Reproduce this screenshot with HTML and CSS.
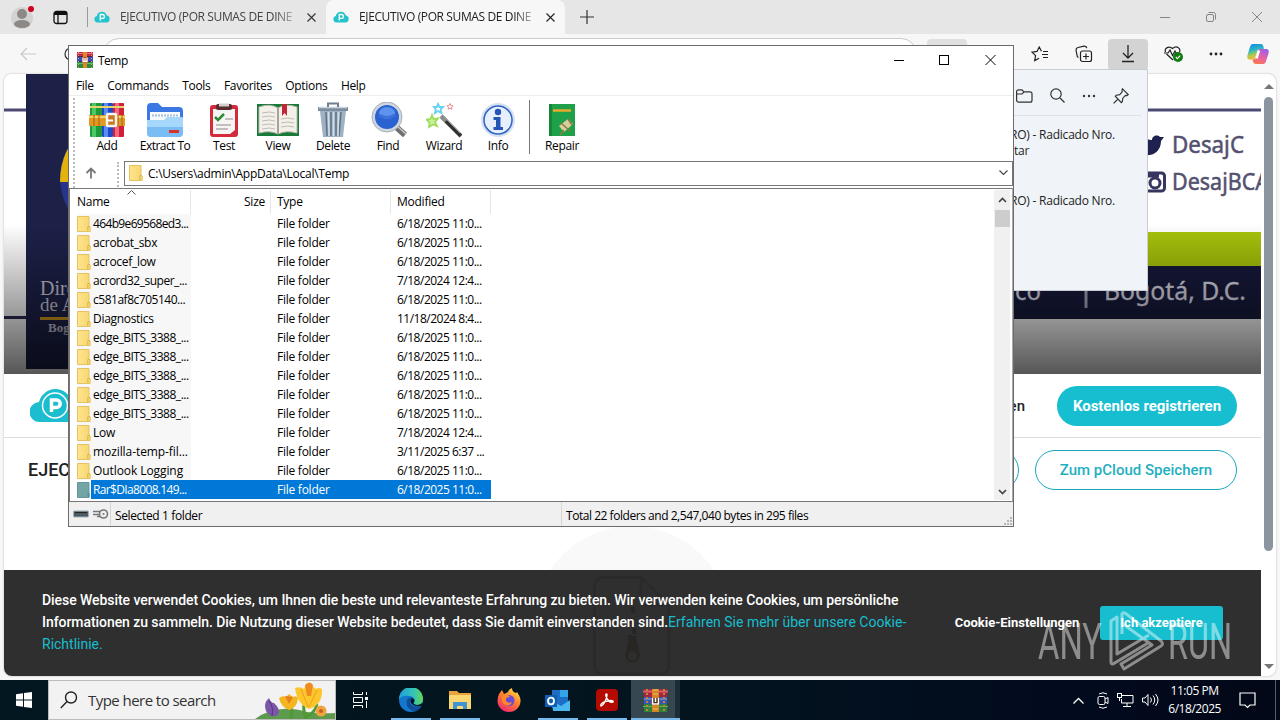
FILE: index.html
```html
<!DOCTYPE html>
<html lang="de">
  <head>
    <meta charset="utf-8">
    <title>Desktop</title>
    <link rel="stylesheet" href="styles.css">
  </head>
  <body>
    <svg width="0" height="0" class="defs">
      <defs>
        <symbol id="cloud" viewBox="0 0 16 12">
          <path d="M3.5 11.5a3.3 3.3 0 0 1-.6-6.5A5 5 0 0 1 12.600 4.200 3.700 3.700 0 0 1 12.500 11.500z" fill="#25c3cb"/>
          <path d="M6.300 9.500v-6h2.200a1.900 1.900 0 0 1 0 3.800H6.300" fill="none" stroke="#fff" stroke-width="1.300"/>
        </symbol>
        <symbol id="books" viewBox="0 0 36 36">
          <rect x="1" y="1" width="12" height="34" rx="1" fill="#1f9a3a"/><rect x="3" y="1" width="4" height="34" fill="#4cc763"/>
          <rect x="13" y="1" width="11" height="34" rx="1" fill="#1f49c8"/><rect x="15" y="1" width="4" height="34" fill="#5b8cf2"/>
          <rect x="24" y="1" width="11" height="34" rx="1" fill="#cf1f3b"/><rect x="26" y="1" width="4" height="34" fill="#f2667a"/>
          <path d="M1 5h12M24 5h11M13 5h11" stroke="#e8d36a" stroke-width="2"/>
          <rect x="0" y="13" width="36" height="11" fill="#e09a22"/><path d="M0 15h36" stroke="#f8d06a" stroke-width="2"/>
          <path d="M5 13v11M10 13v11M29 13v11M33 13v11" stroke="#a65f10"/>
          <rect x="18" y="12" width="9" height="12" rx="1" fill="#c9781b" stroke="#f4f4f4" stroke-width="2.500"/>
          <path d="M18 18.500h6" stroke="#fff" stroke-width="2"/>
        </symbol>
        <symbol id="rar" viewBox="0 0 16 16">
          <path d="M0 0h16v5H0z" fill="#c4264f"/><path d="M0 5h16v5H0z" fill="#3a4ec0"/><path d="M0 10h16v6H0z" fill="#2e8b3c"/>
          <path d="M0 1.500h16" stroke="#e66f7f"/><path d="M0 11.500h16" stroke="#5fbf62"/>
          <path d="M1 4.500h14M1 9.500h14" stroke="#3a2430" stroke-width=".8"/>
          <path d="M1.500 0v16M14.500 0v16" stroke="#d2b04c" stroke-dasharray="1 2"/>
          <path d="M6 0h4v16H6z" fill="#d98a26"/><path d="M5 5h6v6H5z" fill="#a5441e"/>
          <path d="M6 5.500v4h4v-4M8 6v3" stroke="#fff" stroke-width="1.300" fill="none"/>
        </symbol>
        <linearGradient id="fold" x1="0" x2="1"><stop offset="0" stop-color="#ffe48d"/><stop offset="1" stop-color="#f6d66f"/></linearGradient>
        <symbol id="folder" viewBox="0 0 14 16">
          <path d="M.5.500h11.500v10.500h1.200v4.500H.5z" fill="url(#fold)" stroke="#e6c362"/>
          <path d="M10.800 15v-4.500h2" fill="none" stroke="#dcb44a"/>
        </symbol>
      </defs>
    </svg>

    <!-- Edge -->
    <div class="browser">
      <div class="tabs">
        <svg class="avatar" width="26" height="26" viewBox="0 0 26 26"><circle cx="11" cy="14" r="11" fill="#d5d3d2"/><circle cx="11" cy="10" r="5" fill="#8b8886"/><ellipse cx="11" cy="20" rx="8" ry="4" fill="#8b8886"/><circle cx="20" cy="5" r="3" fill="#d0021b"/></svg>
        <svg class="tabact" width="15" height="15" viewBox="0 0 15 15" fill="none" stroke="#111" stroke-width="1.300"><rect x="1" y="1.500" width="13" height="12" rx="2.500"/><path d="M5 5v8.500"/><path d="M1 3.500h13" stroke-width="3"/></svg>
        <div class="tab first">
          <svg width="16" height="12"><use href="#cloud"/></svg>
          <span>EJECUTIVO (POR SUMAS DE DINE</span>
          <svg class="x" width="9" height="9" viewBox="0 0 9 9"><path d="M.5.500l8 8M8.500.500l-8 8" stroke="#333" stroke-width="1.100"/></svg>
        </div>
        <div class="tab active">
          <svg width="16" height="12"><use href="#cloud"/></svg>
          <span>EJECUTIVO (POR SUMAS DE DINE</span>
          <svg class="x" width="9" height="9" viewBox="0 0 9 9"><path d="M.5.500l8 8M8.500.500l-8 8" stroke="#222" stroke-width="1.100"/></svg>
        </div>
        <svg class="plus" width="14" height="14"><path d="M7 0v14M0 7h14" stroke="#333" stroke-width="1.200"/></svg>
        <div class="winbtns">
          <svg width="102" height="12" viewBox="0 0 102 12" fill="none" stroke="#858585"><path d="M0 6.500h10"/><rect x="46.500" y="3.500" width="7" height="7" rx="1.500"/><path d="M48.500 1.500h5a2 2 0 0 1 2 2v5"/><path d="M92 1l10 10M102 1l-10 10"/></svg>
        </div>
      </div>
      <div class="toolbar">
        <svg width="16" height="14" viewBox="0 0 16 14" fill="none" stroke="#c9c9c9" stroke-width="1.200"><path d="M7 1L1 7l6 6M1 7h15"/></svg>
        <svg class="reload" width="14" height="14" viewBox="0 0 14 14" fill="none" stroke="#333" stroke-width="1.200"><circle cx="7" cy="7" r="6"/></svg>
        <div class="urlbar"></div>
        <div class="ext"></div>
        <svg class="star" width="18" height="16" viewBox="0 0 18 16" fill="none" stroke="#222" stroke-width="1.200"><path d="M10.500 5.200L8.200 1 6 5.400l-5 .7 3.600 3.500-.9 5 4.400-2.300M12 5.500h5M11 8.500h6M12 11.500h5"/></svg>
        <svg class="coll" width="18" height="18" viewBox="0 0 18 18" fill="none" stroke="#222" stroke-width="1.200"><rect x="5.500" y="6" width="11" height="10.500" rx="2"/><path d="M11 8.500v6M8 11.500h6M3.500 12.500A2.500 2.500 0 0 1 2 10L1 5a2.500 2.500 0 0 1 2-2.500L9 1.200a2.500 2.500 0 0 1 2.800 2"/></svg>
        <div class="dl"><svg width="14" height="18" viewBox="0 0 14 18" fill="none" stroke="#222" stroke-width="1.300"><path d="M7 0v13M2 8l5 5 5-5M1 16.500h12"/></svg></div>
        <svg class="heart" width="20" height="18" viewBox="0 0 20 18" fill="none" stroke="#222" stroke-width="1.200"><path d="M9 15L2.500 9M1.500 7C0 3 5 .5 8.500 3.500 12.500 0 17 3 15.500 7"/><path d="M0 8h4l2-3 2.500 5.500L11 6l1 2h2"/><circle cx="14" cy="12" r="5" fill="#107c10" stroke="none"/><path d="M11.800 12l1.600 1.600 2.800-3" stroke="#fff"/></svg>
        <svg class="dots" width="14" height="4" fill="#222"><circle cx="2" cy="2" r="1.400"/><circle cx="7" cy="2" r="1.400"/><circle cx="12" cy="2" r="1.400"/></svg>
        <svg width="22" height="20" viewBox="0 0 22 20">
          <defs>
            <linearGradient id="cpa" x1="0" y1="0" x2=".3" y2="1"><stop offset="0" stop-color="#1b7fe0"/><stop offset=".45" stop-color="#27b7c8"/><stop offset=".75" stop-color="#b6cc45"/><stop offset="1" stop-color="#f2b53a"/></linearGradient>
            <linearGradient id="cpb" x1=".7" y1="0" x2=".2" y2="1"><stop offset="0" stop-color="#9b5fe6"/><stop offset=".5" stop-color="#ea5fa5"/><stop offset="1" stop-color="#fb7a42"/></linearGradient>
          </defs>
          <path d="M6 0h8c2 0 2.500 2 3 5h-4c-2 0-2.500 1-3 3l-1.500 5c-.5 2-1.500 2.500-3 2.500H2.500C0 15.500 0 13 .5 11L3 3c.5-2 1.500-3 3-3z" fill="url(#cpa)"/>
          <path d="M13 5h6c3 0 3 2.500 2.500 4.500L19 17c-.5 2-1.500 3-3 3H9c-2 0-3-1.500-3.500-4.500 2 0 3-.5 3.500-2.500l1.500-5.500C11 5.500 12 5 13 5z" fill="url(#cpb)"/>
          <path d="M12 6.500l-2.500 8" stroke="#fff" stroke-width="2.500"/>
        </svg>
      </div>

      <div class="page">
        <div class="site">
          <svg class="hero" width="1257" height="300" viewBox="4 74 1257 300">
            <defs>
              <linearGradient id="shade" x1="0" y1="0" x2="0" y2="1"><stop offset="0" stop-color="#000" stop-opacity="0"/><stop offset="1" stop-color="#000" stop-opacity=".66"/></linearGradient>
            </defs>
            <rect x="4" y="74" width="1257" height="300" fill="#fff"/>
            <path d="M4 110h1257" stroke="#4c4a74" stroke-width="3"/>
            <rect x="1000" y="232" width="261" height="34" fill="#a9c40b"/>
            <path d="M4 317.500h30" stroke="#2b2b55" stroke-width="3"/>
            <rect x="1000" y="266" width="261" height="53" fill="#171a3c"/>
            <rect x="26" y="74" width="60" height="295" fill="#1d2148"/>
            <ellipse cx="122" cy="178" rx="62" ry="62" fill="#26358a"/>
            <path d="M86 128q-26 20-26 54h26z" fill="#e3b309"/>
            <g font-family="Liberation Serif" fill="#c4c4d0"><text x="40" y="295" font-size="20">Direc</text><text x="40" y="311" font-size="19">de A</text><text x="48" y="332" font-size="13" font-weight="bold">Bogo</text></g>
            <path d="M40 318.500h28" stroke="#d09a1a" stroke-width="3"/>
            <g font-family="Noto Sans, sans-serif" fill="#53516f" stroke="#53516f" stroke-width=".5" font-size="23">
              <text x="1172" y="153" textLength="72" lengthAdjust="spacingAndGlyphs">DesajC</text>
              <text x="1172" y="190" textLength="97" lengthAdjust="spacingAndGlyphs">DesajBCA</text>
            </g>
            <path d="M1140 154c10 4 21-1 21-13l3-4h-4c-3-3-8-1-8 3-4 0-7-2-10-4z" fill="#1f2150"/>
            <rect x="1145.500" y="173" width="19" height="18" rx="3" fill="none" stroke="#35355f" stroke-width="3"/><circle cx="1155" cy="183" r="5" fill="none" stroke="#35355f" stroke-width="3"/><path d="M1145 175h14" stroke="#35355f" stroke-width="5"/>
            <g font-family="Noto Sans, sans-serif" fill="#d9d9e2" stroke="#d9d9e2" stroke-width=".3" font-size="25"><text x="1015" y="300" textLength="26" lengthAdjust="spacingAndGlyphs">co</text><text x="1104" y="300" textLength="142" lengthAdjust="spacingAndGlyphs">Bogotá, D.C.</text></g>
            <path d="M1086 286v22" stroke="#a5a5b8" stroke-width="3"/>
            <rect x="4" y="224" width="1257" height="150" fill="url(#shade)"/>
          </svg>
          <div class="nav">
            <svg width="56" height="34" viewBox="0 0 56 34"><path d="M10 33A10 10 0 0 1 9 13 17 17 0 0 1 42 13a10 10 0 0 1 4 20z" fill="#1bbdcf"/><circle cx="25" cy="16.500" r="12.500" fill="none" stroke="#fff" stroke-width="1.500"/><path d="M21.500 23v-12h5a3.700 3.700 0 0 1 0 7.400h-5" fill="none" stroke="#fff" stroke-width="3.500"/></svg>
            <span class="login">Anmelden</span>
            <button class="register">Kostenlos registrieren</button>
          </div>
          <div class="filebar">
            <span class="filename">EJECU</span>
            <button class="outline small"></button>
            <button class="outline">Zum pCloud Speichern</button>
          </div>
          <div class="circle">
            <svg width="78" height="100" viewBox="0 0 78 100" fill="none"><path d="M10 1.500h38l28 27V88q0 10-10 10H11q-9.500 0-9.500-10V11Q1.500 1.500 10 1.500zM48 2v18q0 9 9 9h18" stroke="#9a9a9a" stroke-width="3"/><path d="M40 31v6M38 42v6M41 52v6M37 59v6" stroke="#555" stroke-width="4"/><path d="M36 60h7l4 19a7 7 0 0 1-15 0z" fill="#7a5a00"/><circle cx="39.500" cy="80" r="4.500" fill="#ddd"/></svg>
          </div>
          <div class="cookies">
            <p>Diese Website verwendet Cookies, um Ihnen die beste und relevanteste Erfahrung zu bieten. Wir verwenden keine Cookies, um persönliche<br>Informationen zu sammeln. Die Nutzung dieser Website bedeutet, dass Sie damit einverstanden sind.<a>Erfahren Sie mehr über unsere Cookie-<br>Richtlinie.</a></p>
            <button class="settings">Cookie-Einstellungen</button>
            <button class="accept">Ich akzeptiere</button>
          </div>
        </div>
        <div class="scroll"><i class="up"></i><i class="thumb"></i><i class="down"></i></div>
      </div>
    </div>

    <!-- downloads flyout -->
    <div class="downloads">
      <div class="dlhead">
        <svg width="17" height="14" viewBox="0 0 17 14" fill="none" stroke="#333" stroke-width="1.200"><path d="M.6 3A2 2 0 0 1 2.600.800h3.400l2 2h6a2 2 0 0 1 2 2v6.400a2 2 0 0 1-2 2H2.600a2 2 0 0 1-2-2zM.6 5H6l2-2.200"/></svg>
        <svg width="15" height="15" viewBox="0 0 15 15" fill="none" stroke="#333" stroke-width="1.200"><circle cx="6" cy="6" r="5.200"/><path d="M10 10l4.500 4.500"/></svg>
        <svg width="14" height="4" fill="#333"><circle cx="2" cy="2" r="1.200"/><circle cx="7" cy="2" r="1.200"/><circle cx="12" cy="2" r="1.200"/></svg>
        <svg width="16" height="16" viewBox="0 0 16 16" fill="none" stroke="#333" stroke-width="1.200"><path d="M9.500.800l5.700 5.700-1.300 1-1.400-.2-2.700 2.900-.5 3.500-1 1L2.300 8.200l1-1 3.400-.6 2.500-2.700L9 2zM5 11L.6 15.400"/></svg>
      </div>
      <div class="dlitem">RO) - Radicado Nro.<br><span>tar</span></div>
      <div class="dlitem second">RO) - Radicado Nro.</div>
    </div>

    <!-- WinRAR -->
    <div class="winrar">
      <div class="title">
        <svg width="16" height="16"><use href="#rar"/></svg>
        <span>Temp</span>
        <svg class="ctl" width="102" height="12" viewBox="0 0 102 12" fill="none" stroke="#000"><path d="M0 6.500h10"/><rect x="45.500" y="1.500" width="9" height="9"/><path d="M91.500 1l10 10M101.500 1l-10 10"/></svg>
      </div>
      <div class="menu"><span>File</span><span>Commands</span><span>Tools</span><span>Favorites</span><span>Options</span><span>Help</span></div>
      <div class="bars">
        <div class="buttons">
          <div class="tb add"><svg width="36" height="36"><use href="#books"/></svg>Add</div>
          <div class="tb extract"><svg width="38" height="36" viewBox="0 0 38 36">
            <path d="M1 32V5q0-4 4-4h7l4 4h17q4 0 4 4v20z" fill="#3c78e4"/><path d="M4 10h30v12H4z" fill="#f7fafd"/><path d="M6 13.500h26" stroke="#a9c0d6" stroke-width="2" stroke-dasharray="2 1"/><path d="M1 18h17l3-3h15q1 0 1 2v14q0 4-4 4H5q-4 0-4-4z" fill="#a5d8fb"/><path d="M1 25h36v6q0 4-4 4H5q-4 0-4-4z" fill="#7abdf4"/><rect x="23" y="28" width="10" height="3" fill="#d8342b"/></svg>Extract To</div>
          <div class="tb test"><svg width="30" height="36" viewBox="0 0 30 36">
            <rect x="1" y="3" width="28" height="32" rx="3" fill="#d42b3a"/><path d="M4 7h22v21l-5 4H4z" fill="#f7f5f3"/><rect x="7" y="2" width="16" height="6" rx="2" fill="#5a2b30"/><path d="M10 3h10" stroke="#d8cfcf" stroke-width="3"/><path d="M6 15l3 3 6-6" fill="none" stroke="#2c8a35" stroke-width="2.500"/><path d="M16 17h8M7 23h15M7 27h12" stroke="#b3adb0" stroke-width="1.500"/></svg>Test</div>
          <div class="tb view"><svg width="44" height="36" viewBox="0 0 44 36">
            <path d="M1 2h42v32H1z" fill="#187a38"/><path d="M3 5Q14 1 22 6q8-5 19-1v26q-11-3-19 1-8-4-19-1z" fill="#f3f0ea" stroke="#beb8ad"/><path d="M22 6v26" stroke="#8d8880" stroke-width="1.500"/><path d="M6 11q8-2 13 0M6 15q8-2 13 0M6 19q8-2 13 0M6 23q8-2 13 0M6 27q8-2 13 0M25 17q7-2 13 0M25 21q7-2 13 0M25 25q7-2 13 0" fill="none" stroke="#bfbbb5"/><path d="M26 2h5v12l-2.500-3-2.500 3z" fill="#c42536"/></svg>View</div>
          <div class="tb delete"><svg width="32" height="36" viewBox="0 0 32 36">
            <path d="M3 9h26l-3 26H6z" fill="#9fb2c4"/><path d="M9 10l1 24M14 10v24M19 10v24M24 10l-2 24" stroke="#5f7388" stroke-width="1.500"/><path d="M11.500 10l.5 24M16.500 10v24M21.500 10l-.5 24" stroke="#d4dee6" stroke-width="1.500"/><path d="M1 5h30v4H1z" fill="#7c8d9e"/><path d="M2 5.500h28" stroke="#cad4dc" stroke-width="1.500"/><path d="M11 5V1.500h10V5" fill="none" stroke="#6f7f8f" stroke-width="2"/></svg>Delete</div>
          <div class="tb find"><svg width="37" height="36" viewBox="0 0 37 36">
            <path d="M25 24l10 9" stroke="#707070" stroke-width="6"/><path d="M26 23l10 9" stroke="#c9c9c9" stroke-width="1.500"/><circle cx="17" cy="15" r="15" fill="#cfd6dd" stroke="#a6b1bb"/><circle cx="17" cy="15" r="12" fill="#2b62d2"/><ellipse cx="17" cy="11" rx="8" ry="6" fill="#5d93ee"/><path d="M9 13q8 5 16 0" stroke="#3b70d8" stroke-width="3" fill="none"/></svg>Find</div>
          <div class="tb wizard"><svg width="36" height="36" viewBox="0 0 36 36">
            <path d="M16 15l19 19" stroke="#333" stroke-width="4"/><path d="M15 14l5 5" stroke="#8d8d8d" stroke-width="4"/><path d="M18 15l16 16" stroke="#999"/><g fill="none" stroke-width="1.800"><path d="M6 13l1.500 4 4.500-.5-3 3.500 2 4-4-1.500-4 2.500.5-4.500-3-3 4-.5z" fill="#c9f09a" stroke="#a0dd5d"/><path d="M12 2l1.500 3h3.500l-2.500 2.500 1 3.500-3.500-2-3 2 .8-3.500L8 5h3z" stroke="#66d2ef"/><path d="M24 1.500l1 2 2 .3-1.500 1.400.4 2-1.900-1-1.900 1 .4-2L21 3.800l2-.3z" stroke="#f58b90" stroke-width="1"/></g></svg>Wizard</div>
          <div class="tb info"><svg width="36" height="36" viewBox="0 0 36 36">
            <circle cx="18" cy="18" r="17" fill="#d6e2f2"/><circle cx="18" cy="18" r="14" fill="#e6effb" stroke="#2e62c4" stroke-width="1.500"/><circle cx="18" cy="10" r="3.200" fill="#2455b4"/><path d="M13.500 15h7v10h2.500v3H13.500v-3H16v-7h-2.500z" fill="#2455b4"/></svg>Info</div>
          <div class="tb repair"><svg width="28" height="36" viewBox="0 0 28 36">
            <path d="M1 2h26v32H1z" fill="#1fa14a"/><path d="M1 2h3v32H1z" fill="#15873a"/><path d="M5 8.500h18" stroke="#e9a92f" stroke-width="2.500"/><path d="M11 24l9-7 5 5-9 8z" fill="#d9cf9c"/><path d="M13 21l9 8M20 17l4 6M12 33l4-5" stroke="#8b7a45" stroke-width="1.500"/></svg>Repair</div>
        </div>
        <div class="address">
          <svg width="12" height="12" viewBox="0 0 12 12" fill="none" stroke="#777" stroke-width="1.800"><path d="M6 11.500V1.500M1.500 6L6 1.500 10.500 6"/></svg>
          <div class="path"><svg width="14" height="16"><use href="#folder"/></svg><span>C:\Users\admin\AppData\Local\Temp</span><svg class="caret" width="9" height="6"><path d="M.5.500l4 4 4-4" fill="none" stroke="#444" stroke-width="1.100"/></svg></div>
        </div>
      </div>
      <div class="list">
        <div class="table">
          <div class="row head"><span class="name">Name<svg width="9" height="5"><path d="M.5 4.500l4-4 4 4" fill="none" stroke="#555"/></svg></span><span class="size">Size</span><span>Type</span><span>Modified</span></div>
          <div class="row"><span class="name"><svg width="14" height="16"><use href="#folder"/></svg><b class="tight">464b9e69568ed3...</b></span><span class="size"></span><span>File folder</span><span class="date">6/18/2025 11:0...</span></div>
          <div class="row"><span class="name"><svg width="14" height="16"><use href="#folder"/></svg><b>acrobat_sbx</b></span><span class="size"></span><span>File folder</span><span class="date">6/18/2025 11:0...</span></div>
          <div class="row"><span class="name"><svg width="14" height="16"><use href="#folder"/></svg><b>acrocef_low</b></span><span class="size"></span><span>File folder</span><span class="date">6/18/2025 11:0...</span></div>
          <div class="row"><span class="name"><svg width="14" height="16"><use href="#folder"/></svg><b class="mid">acrord32_super_...</b></span><span class="size"></span><span>File folder</span><span class="date">7/18/2024 12:4...</span></div>
          <div class="row"><span class="name"><svg width="14" height="16"><use href="#folder"/></svg><b class="mid">c581af8c705140...</b></span><span class="size"></span><span>File folder</span><span class="date">6/18/2025 11:0...</span></div>
          <div class="row"><span class="name"><svg width="14" height="16"><use href="#folder"/></svg><b>Diagnostics</b></span><span class="size"></span><span>File folder</span><span class="date">11/18/2024 8:4...</span></div>
          <div class="row"><span class="name"><svg width="14" height="16"><use href="#folder"/></svg><b class="mid">edge_BITS_3388_...</b></span><span class="size"></span><span>File folder</span><span class="date">6/18/2025 11:0...</span></div>
          <div class="row"><span class="name"><svg width="14" height="16"><use href="#folder"/></svg><b class="mid">edge_BITS_3388_...</b></span><span class="size"></span><span>File folder</span><span class="date">6/18/2025 11:0...</span></div>
          <div class="row"><span class="name"><svg width="14" height="16"><use href="#folder"/></svg><b class="mid">edge_BITS_3388_...</b></span><span class="size"></span><span>File folder</span><span class="date">6/18/2025 11:0...</span></div>
          <div class="row"><span class="name"><svg width="14" height="16"><use href="#folder"/></svg><b class="mid">edge_BITS_3388_...</b></span><span class="size"></span><span>File folder</span><span class="date">6/18/2025 11:0...</span></div>
          <div class="row"><span class="name"><svg width="14" height="16"><use href="#folder"/></svg><b class="mid">edge_BITS_3388_...</b></span><span class="size"></span><span>File folder</span><span class="date">6/18/2025 11:0...</span></div>
          <div class="row"><span class="name"><svg width="14" height="16"><use href="#folder"/></svg><b>Low</b></span><span class="size"></span><span>File folder</span><span class="date">7/18/2024 12:4...</span></div>
          <div class="row"><span class="name"><svg width="14" height="16"><use href="#folder"/></svg><b class="wide">mozilla-temp-fil...</b></span><span class="size"></span><span>File folder</span><span class="date">3/11/2025 6:37 ...</span></div>
          <div class="row"><span class="name"><svg width="14" height="16"><use href="#folder"/></svg><b class="wide">Outlook Logging</b></span><span class="size"></span><span>File folder</span><span class="date">6/18/2025 11:0...</span></div>
          <div class="row selected"><span class="name"><svg width="14" height="16" viewBox="0 0 14 16"><path d="M.5.500h11.500v15H.5z" fill="#73a5a6" stroke="#6496a0"/><path d="M10.500 15v-4h2v4z" fill="#5d8f98"/></svg><b class="tight">Rar$DIa8008.149...</b></span><span class="size"></span><span>File folder</span><span class="date">6/18/2025 11:0...</span></div>
        </div>
        <div class="vscroll">
          <svg width="9" height="6"><path d="M1 5l3.500-3.500L8 5" fill="none" stroke="#444" stroke-width="1.700"/></svg>
          <i></i>
          <svg class="bottom" width="9" height="6"><path d="M1 1l3.500 3.500L8 1" fill="none" stroke="#444" stroke-width="1.700"/></svg>
        </div>
      </div>
      <div class="status">
        <svg width="36" height="12" viewBox="0 0 36 12"><rect x=".5" y="3" width="15" height="6" rx="1" fill="#4d5a63" stroke="#a4afb6"/><path d="M2 4.500h12" stroke="#222"/><path d="M20 3.500h9M20 6.500h7M24 8.500h4" stroke="#777" stroke-width="1.500"/><circle cx="30.500" cy="6" r="4" fill="#eee" stroke="#777" stroke-width="1.600"/><circle cx="30.500" cy="6" r="1" fill="#777"/></svg>
        <span class="sel">Selected 1 folder</span>
        <span class="total">Total 22 folders and 2,547,040 bytes in 295 files</span>
        <svg class="grip" width="9" height="9" fill="#b5b5b5"><path d="M6 0h2v2H6zM3 3h2v2H3zM6 3h2v2H6zM0 6h2v2H0zM3 6h2v2H3zM6 6h2v2H6z"/></svg>
      </div>
    </div>

    <svg class="watermark" width="200" height="64" viewBox="1036 608 200 64">
      <g font-family="Roboto, sans-serif" font-weight="400" font-size="50" fill="#fff">
        <text x="1038" y="659" textLength="64" lengthAdjust="spacingAndGlyphs">ANY</text>
        <text x="1168" y="659" textLength="64" lengthAdjust="spacingAndGlyphs">RUN</text>
      </g>
      <path d="M1148 643l-35 21q-2 0-2-2v-41l6-4v37l32-19M1122 634v-20q1-2 3-1l36 28q3 3 0 5l-37 23-3-5 31-19-29-21" fill="none" stroke="#fff" stroke-width="3" stroke-linejoin="round"/>
    </svg>

    <div class="taskbar">
      <div class="start"><svg width="16" height="16" fill="#fff"><path d="M0 2.300L7 1.300V7.600H0zM8 1.100L16 0V7.600H8zM0 8.500H7V14.800L0 13.800zM8 8.500H16V16L8 14.900z"/></svg></div>
      <div class="search">
        <svg class="lens" width="18" height="18" viewBox="0 0 18 18" fill="none" stroke="#222" stroke-width="1.400"><circle cx="11" cy="6.500" r="5.500"/><path d="M7 10.500L.8 17"/></svg>
        <span>Type here to search</span>
        <svg class="flowers" width="80" height="38" viewBox="0 0 80 38">
          <path d="M0 38Q22 22 52 31 66 33 80 32v6z" fill="#5e9a4d"/>
          <path d="M11 30Q8 22 14 17q2 5 5 5 7 6 4 12-7 4-12-4z" fill="#7b55a8"/><path d="M14 20q5 6 3 15" stroke="#553381" fill="none"/>
          <path d="M36 38Q38 26 34 22M51 38Q46 24 52 20M51 36q9-4 11-13" stroke="#4d9a35" stroke-width="3" fill="none"/>
          <path d="M24 17q4-3 7-1l3-3 4 3q3-2 5 1-1 10-9 12-8-3-10-12z" fill="#f5b51f"/><path d="M30 15l4 8 4-7z" fill="#e68120"/>
          <path d="M40 7q5-2 9 1l3-6 5 3 4 3q3-2 6 0 1 16-13 20-12-5-14-21z" fill="#fdc62c"/><path d="M50 4q5-5 8 0l-2 11h-4z" fill="#ef8c21"/><path d="M46 8l7 18M62 9l-8 17" stroke="#e9a31b"/>
          <circle cx="66" cy="30" r="5.500" fill="#f0a33e"/><circle cx="66" cy="30" r="2" fill="#c45f26"/>
        </svg>
      </div>
      <div class="app"><svg width="17" height="16" viewBox="0 0 17 16" fill="none" stroke="#fff"><path d="M1.500 0v2.500h9V0M1.500 16v-2.500h9V16M1.500 5.500h9v5h-9zM14.500 0v3M14.500 9v7"/><path d="M13 5h3v3h-3z" fill="#fff" stroke="none"/></svg></div>
      <div class="app open edge"><svg width="24" height="24" viewBox="0 0 24 24">
        <defs><linearGradient id="eg" x1="0" x2="1"><stop offset="0" stop-color="#1f9fdc"/><stop offset=".6" stop-color="#35c3b5"/><stop offset="1" stop-color="#62d65a"/></linearGradient></defs>
        <circle cx="12" cy="12" r="12" fill="#1378cc"/><path d="M0 11A12 12 0 0 1 24 11c0 4-3 6-6 6-2 0-4-1-3.500-2 3-4-1-7-4-7C5 7 2 9 0 11z" fill="url(#eg)"/><path d="M8 12c-2 6 3 11 8 11 4-1 6-4 7-6-4 3-11 2-12-3 0-3 2-4 2-4-2-1-4 0-5 2z" fill="#0f4e98"/><path d="M13 10c3 1 3 3 1.500 5 0 2 5 3 9 0L24 17q-6 3-11-1-3-3 0-6z" fill="#031520"/></svg></div>
      <div class="app open"><svg width="22" height="20" viewBox="0 0 22 20"><path d="M0 1h8l2 2h12v16H0z" fill="#e8a33b"/><path d="M1 5h21v14H0V6z" fill="#fbd772"/><path d="M4 19v-7h14v7h-4v-3H8v3z" fill="#3f93d2"/></svg></div>
      <div class="app"><svg width="24" height="24" viewBox="0 0 24 24">
        <defs><linearGradient id="ff" x1=".8" y1="0" x2=".2" y2="1"><stop offset="0" stop-color="#ffe14b"/><stop offset=".45" stop-color="#ff7f2b"/><stop offset="1" stop-color="#f0227a"/></linearGradient></defs>
        <path d="M2 6l3-4 2 4 4-2q1-3 4-4 0 4 4 5l1-1q4 6 3.500 9a11.500 11 0 0 1-23 0Q.5 9 2 6z" fill="url(#ff)"/><circle cx="12" cy="12.500" r="5.500" fill="#6b4ad8"/><path d="M5 8q5-3 8 1-5 0-4 4 2 3 6 1-2 5-7 3-4-3-3-9z" fill="#ff8a2a"/></svg></div>
      <div class="app open"><svg width="25" height="22" viewBox="0 0 25 22"><path d="M7 1h16v18H7z" fill="#1c6fc4"/><path d="M15 1h8v7h-8z" fill="#32a6e6"/><path d="M7 12l9 5 9-6v11H8z" fill="#4bb7f1"/><path d="M0 6h12v12H0z" fill="#0f5eb5"/><ellipse cx="6" cy="12" rx="3" ry="3.300" fill="none" stroke="#fff" stroke-width="1.800"/></svg></div>
      <div class="app open"><svg width="22" height="22" viewBox="0 0 22 22"><rect width="22" height="22" rx="4" fill="#b30b00"/><path d="M5 17c2 0 6-7 6-11 0-2-2-1-1 1 1 4 4 7 7 6 1-1-2-2-5-1-4 0-8 3-7 5z" fill="none" stroke="#fff" stroke-width="1.400"/></svg></div>
      <div class="app open current"><svg width="25" height="23" preserveAspectRatio="none" viewBox="0 0 25 23">
        <path d="M1 0h23v8H1z" fill="#a72340"/><path d="M1 8h23v7H1z" fill="#3855b8"/><path d="M1 15h23v8H1z" fill="#2d8138"/><path d="M0 2.500h25" stroke="#da5f69" stroke-width="2"/><path d="M1 10h23" stroke="#8eacf0"/><path d="M0 17.500h25" stroke="#5db061"/><path d="M4 0v23M21 0v23" stroke="#b58a32" stroke-width="2" stroke-dasharray="2 2"/><path d="M9 0h7v23H9z" fill="#d58425"/><path d="M10 1h5M10 5h5M10 20h5" stroke="#f1c162"/><path d="M8 9h9v7H8z" fill="#4b3122"/><path d="M9.500 9v6h6V9M12.500 9v4" fill="none" stroke="#fff" stroke-width="1.500"/></svg></div>
      <div class="tray">
        <svg width="11" height="7"><path d="M.5 6.500l5-5 5 5" fill="none" stroke="#fff" stroke-width="1.300"/></svg>
        <svg class="cam" width="12" height="17" viewBox="0 0 12 17" fill="none" stroke="#fff"><rect x="1" y="4.500" width="7" height="8" rx="1.500"/><path d="M8 7l3-1.500v6L8 10M2 2q4-2.500 8 0M2 15q4 2.500 8 0"/></svg>
        <svg width="17" height="14" viewBox="0 0 17 14" fill="none" stroke="#fff"><path d="M5 2.500h11v7.500H4.500V6M10 10v3M6 13.500h8"/><rect x=".5" y=".5" width="4" height="4"/><path d="M2.500 5v3"/></svg>
        <svg width="17" height="14" viewBox="0 0 17 14" fill="none" stroke="#fff"><path d="M.5 5h2.500l3-3.500v11L3 9H.5zM8.500 4.500q2 2.500 0 5M11 2.500q3.500 4.500 0 9M13.500 1q5 6 0 12"/></svg>
        <div class="clock">11:05 PM<br>6/18/2025</div>
        <svg width="17" height="17" viewBox="0 0 17 17" fill="none" stroke="#fff" stroke-width="1.200"><path d="M1 1h15v12h-5l-2.500 2.500L6 13H1z"/></svg>
      </div>
    </div>
  </body>
</html>
```
FILE: styles.css
```css
* { box-sizing: border-box; }
body {
  margin: 0;
  width: 1280px;
  height: 720px;
  overflow: hidden;
  position: relative;
  font-family: "Open Sans", "Noto Sans", sans-serif;
  font-size: 12px;
  color: #000;
  display: flex;
  flex-direction: column;
}
svg { display: block; flex: none; }
.defs { position: absolute; }
button { border: 0; margin: 0; padding: 0; background: none; font-family: Roboto, sans-serif; }

/* browser */
.browser { height: 680px; background: #f7f7f7; padding-bottom: 4px; display: flex; flex-direction: column; }
.tabs { height: 34px; background: #e6e6e6; display: flex; align-items: center; }
.avatar { margin-left: 11px; }
.tabact { margin-left: 16px; }
.tab { display: flex; align-items: center; height: 34px; width: 239px; padding-left: 7px; color: #444; }
.tab.first { margin-left: 19px; position: relative; }
.tab.first::before { content: ""; width: 1px; height: 20px; background: #999; margin: 0 6px 0 -7px; }
.tab.active { background: #f7f7f7; border-radius: 8px 8px 0 0; height: 34px; color: #222; }
.tab span {
  width: 178px;
  margin-left: 10px;
  padding-bottom: 1px;
  white-space: nowrap;
  font-size: 12px;
  letter-spacing: -.38px;
  -webkit-mask-image: linear-gradient(90deg, #000 155px, transparent 182px);
}
.tab .x { margin-left: 9px; }
.plus { margin-left: 15px; }
.winbtns { margin-left: auto; margin-right: 18px; }

.toolbar { height: 40px; display: flex; align-items: center; padding-left: 20px; flex: none; }
.reload { margin-left: 28px; }
.urlbar { margin-left: 25px; width: 814px; height: 32px; background: #fff; border: 1px solid #ccc; border-radius: 16px; }
.ext { margin-left: 10px; width: 40px; height: 30px; border-radius: 4px; background: #e0e0e0; }
.star { margin-left: 64px; }
.coll { margin-left: 26px; }
.dl { margin-left: 15px; width: 40px; height: 31px; background: #d3d3d3; border-radius: 4px; display: flex; align-items: center; justify-content: center; }
.heart { margin-left: 16px; }
.dots { margin-left: 25px; margin-right: 24px; }

.page { margin: 0 4px; height: 602px; background: #fff; border-radius: 8px; overflow: hidden; display: flex; box-shadow: 0 0 2px #aaa; }
.site { width: 1257px; display: flex; flex-direction: column; position: relative; }
.nav { height: 64px; display: flex; align-items: center; border-bottom: 1px solid #ddd; padding: 0 24px 0 26px; }
.login { margin-left: auto; font: 500 15px Roboto, sans-serif; color: #222; }
.register { margin-left: 32px; width: 180px; height: 40px; border-radius: 20px; background: #17bed0; color: #fff; font-size: 15px; font-weight: 700; letter-spacing: -.05px; }
.filebar { height: 64px; display: flex; align-items: center; padding: 0 24px; }
.filename { font: 500 18px Roboto, sans-serif; color: #222; margin-right: auto; padding-bottom: 2px; }
.outline { width: 202px; height: 40px; border-radius: 20px; border: 1px solid #17a8b8; color: #1fb0c0; font-size: 15px; font-weight: 500; }
.outline.small { margin-right: 16px; }
.circle { position: absolute; left: 530px; top: 452px; width: 196px; height: 196px; border-radius: 50%; background: #f9f9f9; display: flex; justify-content: center; padding-top: 50px; }
.cookies {
  position: relative;
  margin-top: auto;
  height: 106px;
  background: rgba(36, 36, 36, .95);
  display: flex;
  align-items: center;
  font-family: Roboto, sans-serif;
  color: #fff;
}
.cookies p { margin: 0 0 2px 38px; width: 912px; font-size: 14px; line-height: 22px; font-weight: 500; white-space: nowrap; letter-spacing: -.06px; }
.cookies a { color: #17bed0; font-weight: 400; letter-spacing: 0; }
.settings { color: #fff; font-weight: 700; font-size: 13px; letter-spacing: -.03px; width: 126px; padding-bottom: 2px; white-space: nowrap; }
.accept { margin-left: 20px; width: 123px; height: 34px; padding-bottom: 2px; background: #17bed0; color: #fff; border-radius: 3px; font-size: 13px; font-weight: 700; }
.scroll { width: 15px; display: flex; flex-direction: column; align-items: center; padding: 10px 0 7px; }
.scroll .up { border: 5px solid transparent; border-top: 0; border-bottom-color: #777; height: 5px; }
.scroll .thumb { width: 9px; height: 454px; border-radius: 5px; background: #8c959f; margin-top: 8px; }
.scroll .down { border: 5px solid transparent; border-bottom: 0; border-top-color: #777; margin-top: auto; }

.downloads { position: absolute; left: 788px; top: 69px; width: 360px; height: 222px; background: #f0f3f8; border: 1px solid #c9ccd2; color: #222; font-size: 12px; }
.dlhead { height: 46px; margin: 0 6px; border-bottom: 1px solid #dde0e5; display: flex; align-items: center; justify-content: flex-end; gap: 17px; padding: 6px 12px 0 0; }
.dlitem { margin-top: 11px; padding-left: 221px; line-height: 16px; white-space: nowrap; letter-spacing: -.22px; }
.dlitem span { padding-left: 4px; }
.dlitem.second { margin-top: 34px; }

/* archive window */
.winrar { position: absolute; left: 68px; top: 45px; width: 946px; height: 482px; background: #fff; border: 1px solid #6b6b6b; display: flex; flex-direction: column; letter-spacing: -.25px; }
.title { height: 30px; display: flex; align-items: center; padding: 0 0 2px 8px; }
.title span { margin-left: 5px; letter-spacing: -.5px; }
.ctl { margin-left: auto; margin-right: 17px; }
.menu { height: 20px; border-bottom: 1px solid #ededed; display: flex; gap: 13.500px; padding-left: 7px; line-height: 19px; letter-spacing: -.32px; }
.bars { height: 92px; padding-left: 4px; background: linear-gradient(#bbb 50%, #fff 50%) 4px 2px / 2px 4px repeat-y; }
.buttons { display: flex; height: 62px; padding: 6px 0 0 6px; }
.tb { display: flex; flex-direction: column; align-items: center; line-height: 16px; white-space: nowrap; width: 50px; letter-spacing: -.35px; }
.tb.add { width: 56px; }
.tb.extract, .tb.delete { width: 60px; }
.tb.extract { letter-spacing: -.55px; }
.tb.test { width: 58px; }
.tb.wizard { width: 62px; }
.tb.info { width: 46px; margin-right: 8px; }
.tb.repair { width: 66px; position: relative; }
.tb.repair::before { content: ""; position: absolute; left: 0; top: -2px; height: 54px; border-left: 1px solid #777; }
.address { display: flex; align-items: center; height: 30px; padding-left: 12px; }
.path { margin-left: 27px; flex: 1; height: 25px; border: 1px solid #777; display: flex; align-items: center; padding: 0 4px; position: relative; }
.path::before { content: ""; position: absolute; left: -8px; top: 0; height: 25px; border-left: 2px dotted #bbb; }
.path span { margin-left: 5px; }
.caret { margin-left: auto; }
.list { height: 314px; border: 1px solid #777; border-right-color: #aaa; display: flex; padding: 1px; position: relative; }
.table { width: 421px; }
.row { height: 19px; display: flex; line-height: 20px; }
.row > span { width: 100px; padding-left: 6px; white-space: nowrap; }
.row > .name { width: 114px; height: 19px; margin-left: 6px; padding: 0; display: flex; align-items: center; background: #f7f7f7; }
.row > .size { width: 80px; text-align: right; }
.row > span:nth-child(3) { width: 120px; }
.row > .date { letter-spacing: -.5px; }
.row b { font-weight: normal; padding-left: 2px; letter-spacing: -.3px; white-space: nowrap; }
.row b.tight { letter-spacing: -.65px; }
.row b.mid { letter-spacing: -.48px; }
.row b.wide { letter-spacing: -.08px; }
.head { height: 24px; line-height: 24px; }
.head > span { border-right: 1px solid #e5e5e5; }
.head > .name { height: 24px; background: none; padding: 0; position: relative; }
.head .name svg { position: absolute; left: 50px; top: 0; }
.head > .size { padding-right: 5px; }
.selected { color: #fff; background: linear-gradient(#0078d7, #0078d7) 20px 0 / 400px 19px no-repeat; }
.selected > .name { background: none; }
.vscroll { width: 16px; margin-left: auto; background: #f0f0f0; display: flex; flex-direction: column; align-items: center; padding: 7px 0 5px; margin-right: 1px; }
.vscroll i { width: 15px; height: 17px; background: #cdcdcd; margin-top: 7px; }
.vscroll .bottom { margin-top: auto; }
.status { flex: 1; background: #f0f0f0; display: flex; align-items: center; padding-left: 4px; line-height: 20px; }
.status span { padding: 4px 0 0 4px; border-left: 1px solid #d5d5d5; }
.status .sel { margin-left: 1px; width: 451px; letter-spacing: -.37px; }
.status .total { letter-spacing: -.46px; }
.grip { margin: auto 0 0 auto; }

.watermark { position: absolute; left: 1036px; top: 608px; opacity: .45; }

/* taskbar */
.taskbar { height: 40px; background: linear-gradient(90deg, #02171f, #03141f 55%, #020a1e 85%, #020817); display: flex; color: #fff; }
.start { width: 48px; display: flex; align-items: center; justify-content: center; }
.search { width: 288px; height: 40px; background: #f2f2f2; border: 1px solid #bbb; display: flex; align-items: center; padding-left: 11px; color: #333; font-size: 15px; }
.search span { margin-left: 10px; letter-spacing: -.55px; }
.flowers { margin-left: auto; }
.app { width: 49px; height: 40px; display: flex; align-items: center; justify-content: center; }
.app.edge { margin-left: 1px; }
.app.open { box-shadow: none; background: linear-gradient(#76b9ed, #76b9ed) 5px 38px / 40px 2px no-repeat; }
.app.current { background: linear-gradient(#76b9ed, #76b9ed) 0 38px / 49px 2px no-repeat, linear-gradient(90deg, #37474f 44px, #1b2d36 44px); }
.tray { margin-left: auto; display: flex; align-items: center; gap: 8px; padding-right: 19px; border-right: 1px solid #55606b; margin-right: 4px; }
.cam { margin-left: 5px; }
.clock { line-height: 18px; text-align: center; letter-spacing: -.45px; margin: 0 10px 0 1px; }
```
